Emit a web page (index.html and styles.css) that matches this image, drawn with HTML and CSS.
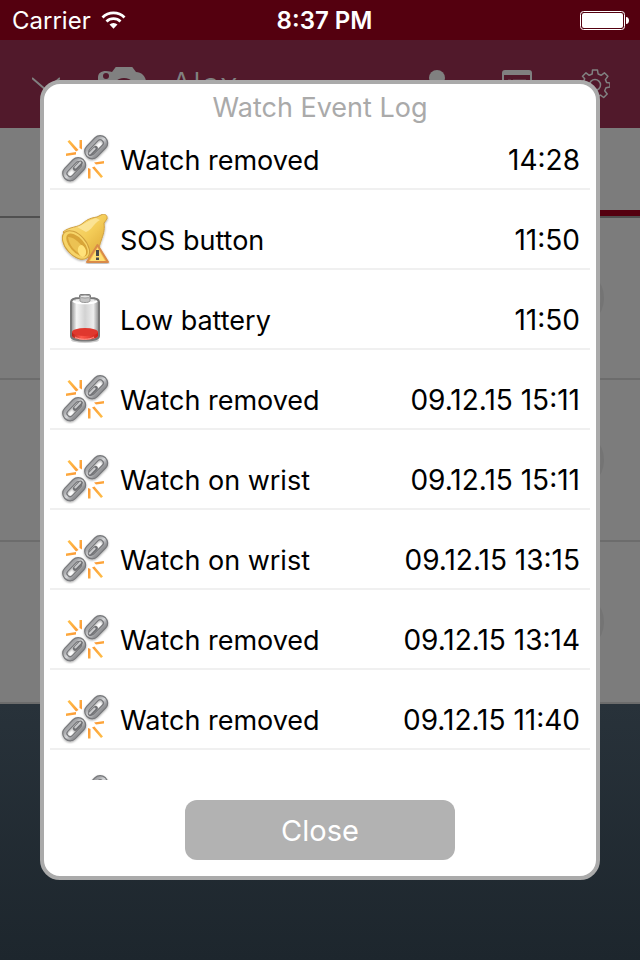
FILE: index.html
```html
<!DOCTYPE html>
<html lang="en">
<head>
    <meta charset="UTF-8">
    <meta name="viewport" content="width=device-width, initial-scale=1.0">
    <title>Watch Event Log</title>
    <link rel="stylesheet" href="styles.css">
</head>
<body>
    <!-- Icon shapes shared by the rows -->
    <svg class="sprite" aria-hidden="true">
        <defs>
            <linearGradient id="steel" x1="0" y1="0" x2="0" y2="1">
                <stop offset="0" stop-color="#a4a5a8"/>
                <stop offset="0.5" stop-color="#d4d5d7"/>
                <stop offset="1" stop-color="#939497"/>
            </linearGradient>
            <linearGradient id="gold" x1="0" y1="0" x2="1" y2="1">
                <stop offset="0" stop-color="#fbe08a"/>
                <stop offset="0.5" stop-color="#f4cd58"/>
                <stop offset="1" stop-color="#d9a030"/>
            </linearGradient>
            <linearGradient id="glass" x1="0" y1="0" x2="1" y2="0">
                <stop offset="0" stop-color="#8a8a8a"/>
                <stop offset="0.2" stop-color="#f4f4f4"/>
                <stop offset="0.5" stop-color="#d2d2d2"/>
                <stop offset="0.8" stop-color="#ededed"/>
                <stop offset="1" stop-color="#858585"/>
            </linearGradient>
            <linearGradient id="charge" x1="0" y1="0" x2="1" y2="0">
                <stop offset="0" stop-color="#b81f17"/>
                <stop offset="0.35" stop-color="#ff5a4c"/>
                <stop offset="1" stop-color="#cf2119"/>
            </linearGradient>
            <linearGradient id="spark" x1="0" y1="0" x2="1" y2="1">
                <stop offset="0" stop-color="#ffc24a"/>
                <stop offset="0.4" stop-color="#fb9030"/>
                <stop offset="0.6" stop-color="#fb9030"/>
                <stop offset="1" stop-color="#ffc24a"/>
            </linearGradient>
            <filter id="soft" x="-20%" y="-20%" width="140%" height="140%">
                <feDropShadow dx="0" dy="1" stdDeviation="1" flood-color="#000" flood-opacity="0.35"/>
            </filter>
        </defs>
        <symbol id="icon-chain" viewBox="0 0 50 50">
            <path d="M7.500 7.500l2-1.500 9 10-2.500 1.500zM19.500 6h2.500v9.500l-2.500-1.500zM6 19.500l10-1.500v2.500L6 22zM34 28.500l10-1.500v2.500l-8 1zM28 34l2.500 1v9.500H28zM32 33.500l2.500-1 8.500 10-2 1.500z" fill="url(#spark)"/>
            <g fill="none" filter="url(#soft)">
                <g transform="rotate(-46 36 13)">
                    <rect x="25" y="8" width="22" height="10.500" rx="5" stroke="#77787b" stroke-width="5.500"/>
                    <rect x="25" y="8" width="22" height="10.500" rx="5" stroke="url(#steel)" stroke-width="3"/>
                    <path d="M27 13.500h8" stroke="#707174" stroke-width="4.500" stroke-linecap="round"/>
                    <path d="M27 13h7" stroke="#c9cacc" stroke-width="2" stroke-linecap="round"/>
                </g>
                <g transform="rotate(-46 14 35)">
                    <rect x="3" y="30" width="22" height="10.500" rx="5" stroke="#77787b" stroke-width="5.500"/>
                    <rect x="3" y="30" width="22" height="10.500" rx="5" stroke="url(#steel)" stroke-width="3"/>
                    <path d="M15 35.500h8" stroke="#707174" stroke-width="4.500" stroke-linecap="round"/>
                    <path d="M16 35h7" stroke="#c9cacc" stroke-width="2" stroke-linecap="round"/>
                </g>
            </g>
        </symbol>
        <symbol id="icon-bell" viewBox="0 0 50 50">
            <g filter="url(#soft)">
                <path d="M3 18c7-6 15-4 20-9 5-4 8-5 14-6l4-2c3-2 7 0 6 4l-3 4c1 8-1 12-3 18-2 7-4 13-10 19z" fill="url(#gold)" stroke="#d0a040" stroke-width="1"/>
                <path d="M17 13c7-2 11-7 19-9l4 2c-7 4-8 10-14 12z" fill="#fdeba9" opacity="0.7"/>
                <ellipse cx="16" cy="31" rx="10" ry="17" transform="rotate(-42 16 31)" fill="#f6d468" stroke="#cf9f3d" stroke-width="1"/>
                <ellipse cx="17" cy="31" rx="7" ry="14" transform="rotate(-42 17 31)" fill="#d8a437"/>
                <path d="M8 23c5 0 10 4 15 10l-1 8C15 38 9 31 8 23z" fill="#ecc252"/>
                <ellipse cx="22" cy="37" rx="4" ry="6" transform="rotate(-15 22 37)" fill="#ffe27a"/>
                <path d="M37.500 31L48 48H27z" fill="#f5c04d" stroke="#d98a48" stroke-width="2" stroke-linejoin="round"/>
                <path d="M37.500 34L45 47H30z" fill="#ffdf75"/>
                <path d="M36 36h3v6h-3zM36 43.500h3v2.500h-3z" fill="#4a4a4a"/>
            </g>
        </symbol>
        <symbol id="icon-low" viewBox="0 0 50 50">
            <ellipse cx="25" cy="46" rx="14" ry="3" fill="#000" opacity="0.2"/>
            <path d="M11 8c0-3 4-4 9-4V2c0-2 10-2 10 0v2c5 0 9 1 9 4v34c0 6-28 6-28 0z" fill="url(#glass)" stroke="#777" stroke-width="2"/>
            <path d="M13 7c3 3 21 3 24 0" fill="none" stroke="#fff" stroke-width="2"/>
            <path d="M20 3v4c1 2 9 2 10 0V3" fill="#c4c4c4" stroke="#999" stroke-width="1"/>
            <ellipse cx="25" cy="2.500" rx="5" ry="1.500" fill="#e8e8e8" stroke="#999" stroke-width="1"/>
            <path d="M12 38v4c2 5 24 5 26 0v-4z" fill="url(#charge)"/>
            <ellipse cx="25" cy="38" rx="13" ry="4" fill="#e0382e"/>
            <path d="M15 43c4 3 15 3 19 0" fill="none" stroke="#ff9b90" stroke-width="1"/>
        </symbol>
    </svg>

    <div class="page">
        <div class="status-bar">
            <div class="carrier">
                <span>Carrier</span>
                <svg class="wifi" viewBox="0 0 25 18" aria-hidden="true">
                    <path d="M1.500 6.500a15.500 15.500 0 0 1 22 0M5.500 10.500a10 10 0 0 1 14 0" fill="none" stroke="#fff" stroke-width="2.800"/>
                    <path d="M8.500 13.500a5.800 5.800 0 0 1 8 0l-4 4.200z" fill="#fff"/>
                </svg>
            </div>
            <div class="clock">8:37 PM</div>
            <svg class="power" viewBox="0 0 49 19" aria-hidden="true">
                <rect x="0.500" y="0.500" width="44" height="18" rx="3" fill="none" stroke="#fff"/>
                <rect x="2" y="2" width="41" height="15" rx="2" fill="#fff"/>
                <path d="M46 6c4 0 4 7 0 7z" fill="#fff"/>
            </svg>
        </div>

        <div class="header">
            <svg class="chevron" viewBox="0 0 28 14" aria-hidden="true">
                <path d="M0 1l14 12L28 1" fill="none" stroke="#808080" stroke-width="2"/>
            </svg>
            <svg class="camera" viewBox="0 0 48 36" aria-hidden="true">
                <path d="M14 6l3-4c0-1 1-1 2-1h14c1 0 2 0 2 1l3 4c5 0 10 4 10 10v15c0 3-2 5-5 5H5c-3 0-5-2-5-5V12c0-5 3-7 8-7 3 0 5 1 6 1z" fill="#808080"/>
                <circle cx="8" cy="10" r="3" fill="#51192b"/>
                <circle cx="26" cy="25" r="13" fill="#51192b"/>
                <circle cx="26" cy="25" r="10" fill="#808080"/>
            </svg>
            <span class="name">Alex</span>
            <div class="tools">
                <svg class="tool" viewBox="0 0 30 30" aria-hidden="true">
                    <circle cx="13" cy="9" r="8" fill="#808080"/>
                    <path d="M1 30c0-16 24-16 24 0z" fill="#808080"/>
                </svg>
                <svg class="tool" viewBox="0 0 30 30" aria-hidden="true">
                    <rect x="1" y="2" width="28" height="27" rx="2" fill="none" stroke="#808080" stroke-width="2"/>
                    <path d="M1 2h28v4H1z" fill="#808080"/>
                    <path d="M6 11h3M11 11h13M6 17h3M11 17h13" stroke="#808080" opacity="0.6"/>
                </svg>
                <svg class="tool" viewBox="0 0 30 30" aria-hidden="true">
                    <g fill="none" stroke="#808080" stroke-width="1.500">
                        <path d="M12.500 1h5l.6 4 3 1.300 3.300-2.500 3.500 3.500-2.500 3.300 1.300 3 3.300.4v4l-4 .8-1.300 3 2.500 3.200-3.500 3.500-3.200-2.400-3 1.300-.5 3h-5l-.5-3.500-3-1.300-3.200 2.400-3.500-3.500 2.400-3.200-1.300-3-3-.5v-4.500l3.500-.5 1.300-3L2.500 7.300 6 3.800l3.200 2.500 3-1.300z" stroke-linejoin="round"/>
                        <circle cx="15" cy="16" r="5.500"/>
                    </g>
                </svg>
            </div>
        </div>

        <div class="tabs">
            <div class="tab"></div>
            <div class="tab active"></div>
        </div>
        <div class="item"><span class="dot"></span></div>
        <div class="item"><span class="dot"></span></div>
        <div class="item"><span class="dot"></span></div>
        <div class="footer"></div>
    </div>

    <!-- Event log dialog -->
    <div class="overlay">
        <div class="dialog" role="dialog" aria-labelledby="log-title">
            <h1 id="log-title">Watch Event Log</h1>
            <ul class="log">
                <li><svg class="icon"><use href="#icon-chain"/></svg><span>Watch removed</span><time>14:28</time></li>
                <li><svg class="icon"><use href="#icon-bell"/></svg><span>SOS button</span><time>11:50</time></li>
                <li><svg class="icon"><use href="#icon-low"/></svg><span>Low battery</span><time>11:50</time></li>
                <li><svg class="icon"><use href="#icon-chain"/></svg><span>Watch removed</span><time>09.12.15 15:11</time></li>
                <li><svg class="icon"><use href="#icon-chain"/></svg><span>Watch on wrist</span><time>09.12.15 15:11</time></li>
                <li><svg class="icon"><use href="#icon-chain"/></svg><span>Watch on wrist</span><time>09.12.15 13:15</time></li>
                <li><svg class="icon"><use href="#icon-chain"/></svg><span>Watch removed</span><time>09.12.15 13:14</time></li>
                <li><svg class="icon"><use href="#icon-chain"/></svg><span>Watch removed</span><time>09.12.15 11:40</time></li>
                <li><svg class="icon"><use href="#icon-chain"/></svg></li>
            </ul>
            <button type="button" class="close">Close</button>
        </div>
    </div>
</body>
</html>
```
FILE: styles.css
```css
* {
    box-sizing: border-box;
}
body {
    margin: 0;
    font-family: Inter, 'Liberation Sans', sans-serif;
    font-size: 27px;
    color: #000;
}
.sprite {
    position: absolute;
    width: 0;
    height: 0;
}

/* page behind the dialog */
.page {
    display: flex;
    flex-direction: column;
    min-height: 100vh;
    background: #7c7c7c;
}
.status-bar {
    display: grid;
    grid-template-columns: 1fr auto 1fr;
    align-items: center;
    height: 40px;
    padding: 0 11px 0 12px;
    background: #54000f;
    color: #fff;
    font-size: 24px;
}
.carrier {
    display: flex;
    align-items: center;
    gap: 10px;
}
.wifi {
    width: 25px;
    height: 18px;
}
.clock {
    padding-left: 8px;
    font-weight: 600;
}
.power {
    width: 49px;
    height: 19px;
    justify-self: end;
}
.header {
    display: flex;
    align-items: center;
    height: 88px;
    padding: 0 30px 0 32px;
    background: #51192b;
    color: #808080;
}
.chevron {
    width: 28px;
    height: 14px;
}
.camera {
    width: 48px;
    height: 36px;
    margin: 0 24px 0 38px;
}
.name {
    font-size: 34px;
    font-weight: 300;
}
.tools {
    display: flex;
    gap: 48px;
    margin-left: auto;
}
.tool {
    width: 30px;
    height: 30px;
}
.tabs {
    display: flex;
    height: 90px;
    border-bottom: 2px solid #505050;
}
.tab {
    flex: 1;
}
.tab.active {
    border-bottom: 6px solid #54000f;
}
.item {
    display: flex;
    align-items: center;
    justify-content: flex-end;
    height: 162px;
    padding-right: 36px;
    border-bottom: 2px solid #6c6c6c;
}
.dot {
    width: 60px;
    height: 60px;
    border: 3px solid #747474;
    border-radius: 50%;
    background: #777;
}
.footer {
    flex: 1;
    background: linear-gradient(#28323a, #1d262d);
}

/* dialog */
.overlay {
    position: fixed;
    inset: 0;
    padding: 80px 40px;
}
.dialog {
    display: flex;
    flex-direction: column;
    height: 100%;
    padding: 0 6px 16px;
    border: 4px solid #aaa;
    border-radius: 20px;
    background: #fff;
}
h1 {
    margin: 0;
    padding-top: 2px;
    font-size: 27px;
    font-weight: 400;
    line-height: 44px;
    text-align: center;
    color: #aaa;
}
.log {
    flex: 1;
    min-height: 0;
    margin: 0;
    padding: 0;
    overflow: hidden;
    list-style: none;
}
.log li {
    display: flex;
    align-items: center;
    gap: 10px;
    height: 80px;
    padding: 20px 10px 0;
    border-bottom: 2px solid #f0f0f0;
}
.log li:first-child {
    height: 60px;
    padding-top: 0;
}
.log span,
.log time {
    padding-top: 2px;
}
.log time {
    margin-left: auto;
    font-size: 28px;
}
.icon {
    width: 50px;
    height: 50px;
}
.close {
    width: 50%;
    height: 60px;
    margin: 20px auto 0;
    border: none;
    border-radius: 12px;
    background: #b2b2b2;
    color: #fff;
    font-family: inherit;
    font-size: 29px;
    cursor: pointer;
}
```
